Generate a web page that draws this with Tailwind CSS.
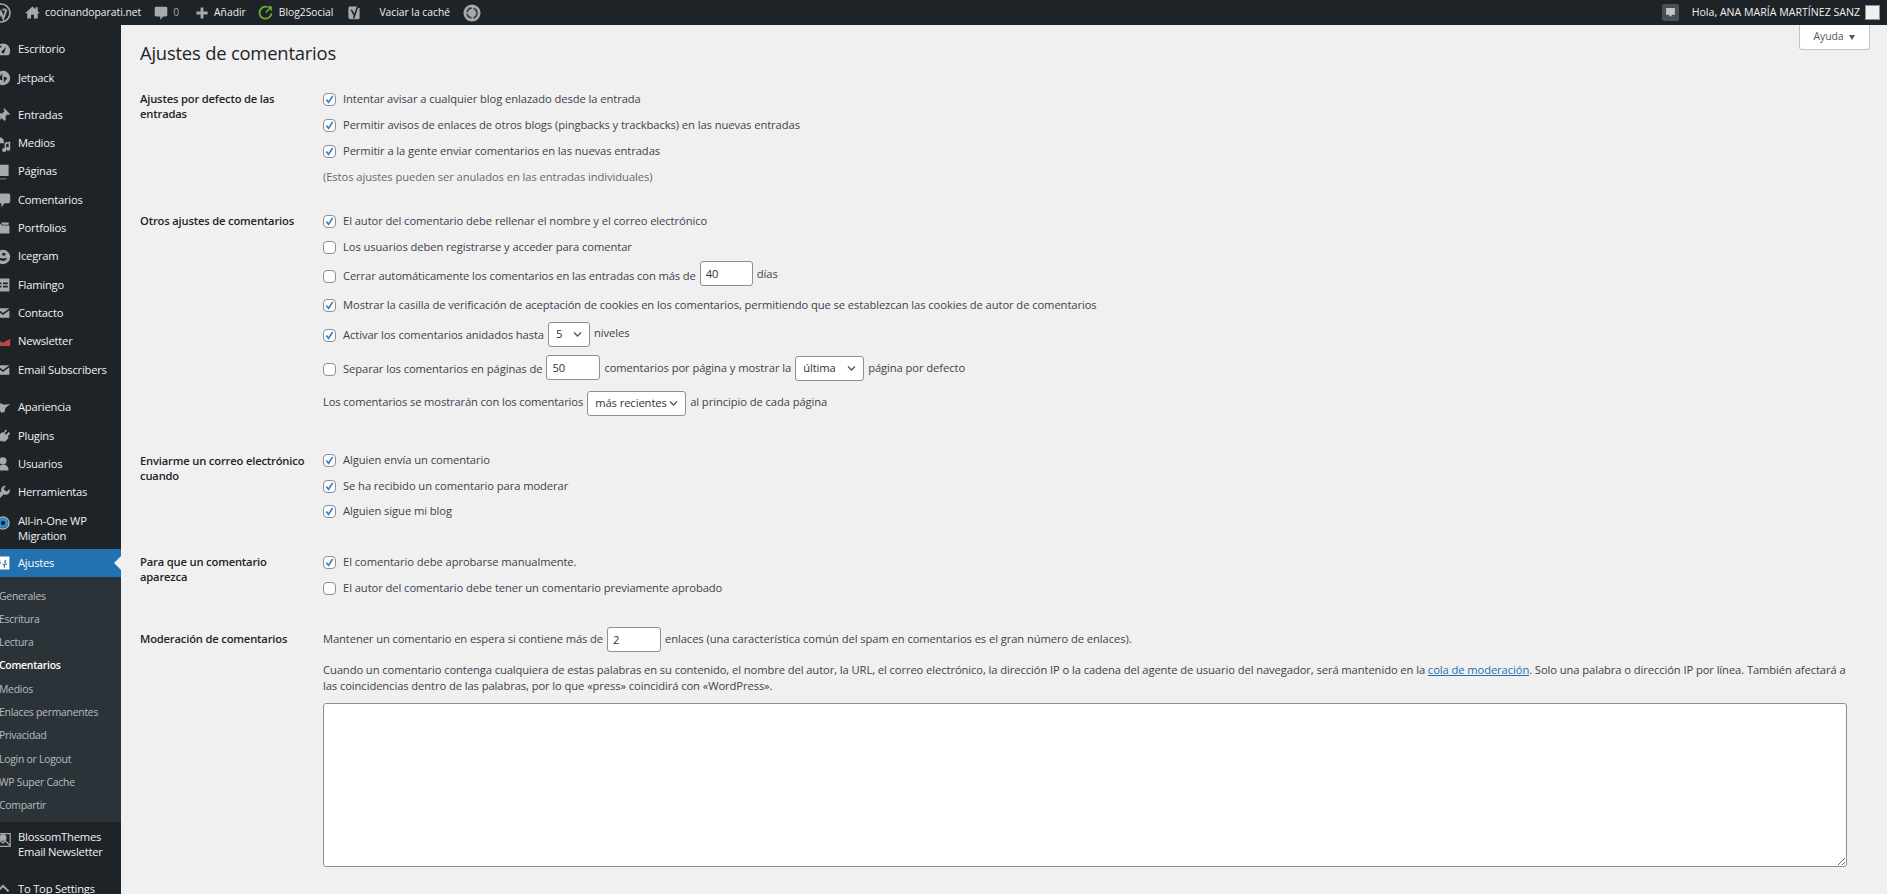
<!DOCTYPE html>
<html lang="es">
<head>
<meta charset="utf-8">
<title>Ajustes de comentarios</title>
<script src="https://cdn.jsdelivr.net/npm/@tailwindcss/browser@4"></script>
</head>
<body class="h-screen overflow-hidden bg-[#f0f0f1] font-['Open_Sans',sans-serif] text-[11.2px] tracking-[-0.075px] text-[#3c434a]">
<header class="h-[25px] bg-[#1d2327] text-[#f0f0f1] text-[10.3px] tracking-normal flex items-center overflow-hidden">
  <svg class="w-[20px] h-[20px] ml-[-9px] text-[#a7aaad]" viewBox="0 0 20 20" fill="none" stroke="currentColor"><circle cx="10" cy="10" r="9" stroke-width="1.6"/><path d="M4.5 6.5l3.2 9 2.3-6.5 2.3 6.5 3.2-9M6 6.5h3M11.5 6.5h3" stroke-width="2"/></svg>
  <svg class="w-[15px] h-[15px] ml-[14px] text-[#a7aaad]" viewBox="0 0 20 20" fill="currentColor"><path d="M10 2L0 11h3v7h5v-5h4v5h5v-7h3l-3-2.7V3h-3v2.6z"/></svg>
  <span class="ml-[5px]">cocinandoparati.net</span>
  <svg class="w-[14px] h-[14px] ml-[13px] text-[#a7aaad]" viewBox="0 0 20 20" fill="currentColor"><path d="M3 1h14a2 2 0 012 2v10a2 2 0 01-2 2h-4l-4 5v-5H3a2 2 0 01-2-2V3a2 2 0 012-2z"/></svg>
  <span class="ml-[5px] text-[#a7aaad]">0</span>
  <svg class="w-[14px] h-[14px] ml-[16px] text-[#a7aaad]" viewBox="0 0 20 20" fill="currentColor"><path d="M8 2h4v6h6v4h-6v6H8v-6H2V8h6z"/></svg>
  <span class="ml-[5px]">Añadir</span>
  <svg class="w-[15px] h-[15px] ml-[12px] text-[#6fae2f]" viewBox="0 0 20 20" fill="none" stroke="currentColor" stroke-width="2.4"><path d="M12 2.5A8 8 0 1018 11"/><path d="M10.5 10L17 3M12.5 2.5H17.5V7.5" stroke-width="2"/></svg>
  <span class="ml-[6px]">Blog2Social</span>
  <svg class="w-[16px] h-[17px] ml-[13px]" viewBox="0 0 20 21"><path fill="#a7aaad" d="M4 3h11l-1 2h3v12a2 2 0 01-2 2H6a3 3 0 01-3-3V5z"/><path fill="none" stroke="#1d2327" stroke-width="2" d="M6.500 7l4 7M14.500 3l-5 15"/></svg>
  <span class="ml-[17px]">Vaciar la caché</span>
  <svg class="w-[18px] h-[18px] ml-[13px]" viewBox="0 0 20 20" fill="none"><circle cx="10" cy="10" r="9.500" fill="#a7aaad"/><circle cx="10" cy="10" r="5.500" stroke="#3c434a" stroke-width="2" stroke-dasharray="7 2"/></svg>
  <span class="ml-auto w-[17px] h-[17px] bg-[#4a4f53] rounded-[2px] flex items-center justify-center">
    <svg class="w-[11px] h-[11px] text-[#c3c4c7]" viewBox="0 0 20 20" fill="currentColor"><path d="M2 2h16v12h-5l-3 4-3-4H2z"/></svg>
  </span>
  <span class="ml-[13px] text-[10.6px]">Hola, ANA MARÍA MARTÍNEZ SANZ</span>
  <span class="ml-[5px] mr-[7px] w-[15px] h-[15px] bg-[#f0f0f1] border border-[#8c8f94]"></span>
</header>

<div class="flex h-[869px] relative">
  <aside class="w-[121px] shrink-0 bg-[#1d2327] text-[#f0f0f1] pt-[10.500px] overflow-hidden tracking-[-0.21px]">
    <nav>
      <a class="flex items-center h-[28.300px]"><svg class="w-[16px] h-[16px] ml-[-5px] mr-[7px] shrink-0 text-[#a7aaad]" viewBox="0 0 20 20" fill="currentColor"><path d="M10 2a9 9 0 00-7 14.500h14A9 9 0 0010 2zm-5 9a1.200 1.200 0 110-2.400A1.200 1.200 0 015 11zm2-4a1.200 1.200 0 110-2.400A1.200 1.200 0 017 7zm4.500 6.500a2 2 0 01-3 0 2 2 0 011-2.800L14 6z"/></svg>Escritorio</a>
      <a class="flex items-center h-[28.300px]"><svg class="w-[16px] h-[16px] ml-[-5px] mr-[7px] shrink-0 text-[#a7aaad]" viewBox="0 0 20 20" fill="currentColor"><path fill-rule="evenodd" d="M10 1a9 9 0 100 18 9 9 0 000-18zM9 4v9L4.500 11zM11 16V8l4.500 2z"/></svg>Jetpack</a>
      <div class="h-[9px]"></div>
      <a class="flex items-center h-[28.300px]"><svg class="w-[16px] h-[16px] ml-[-5px] mr-[7px] shrink-0 text-[#a7aaad]" viewBox="0 0 20 20" fill="currentColor"><path d="M11 1l8 8-2 1-1-1-3 3 .5 4-1.500 1.500-3.500-3.500L3 19l-1-1 5-5.500L3.500 9 5 7.500l4 .5 3-3-1-1z"/></svg>Entradas</a>
      <a class="flex items-center h-[28.300px]"><svg class="w-[16px] h-[16px] ml-[-5px] mr-[7px] shrink-0 text-[#a7aaad]" viewBox="0 0 20 20" fill="currentColor"><path d="M2 2h6l3 3v4H2zM13 8l6-1v9a2.500 2.500 0 11-2-2.400V9.500l-3 .5v7.500a2.500 2.500 0 11-2-2.400V8.500zM3 11a3 3 0 110 6 3 3 0 010-6z"/></svg>Medios</a>
      <a class="flex items-center h-[28.300px]"><svg class="w-[16px] h-[16px] ml-[-5px] mr-[7px] shrink-0 text-[#a7aaad]" viewBox="0 0 20 20" fill="currentColor"><path d="M5 1h12v14H5zM3 4v14h11v1H2V4z"/></svg>Páginas</a>
      <a class="flex items-center h-[28.300px]"><svg class="w-[16px] h-[16px] ml-[-5px] mr-[7px] shrink-0 text-[#a7aaad]" viewBox="0 0 20 20" fill="currentColor"><path d="M3 2h14a2 2 0 012 2v8a2 2 0 01-2 2h-5l-4 5v-5H3a2 2 0 01-2-2V4a2 2 0 012-2z"/></svg>Comentarios</a>
      <a class="flex items-center h-[28.300px]"><svg class="w-[16px] h-[16px] ml-[-5px] mr-[7px] shrink-0 text-[#a7aaad]" viewBox="0 0 20 20" fill="currentColor"><path d="M1 5h6l2 2h9v10H1zM8 3h9v3H9.500L8 4.500z"/></svg>Portfolios</a>
      <a class="flex items-center h-[28.300px]"><svg class="w-[16px] h-[16px] ml-[-5px] mr-[7px] shrink-0 text-[#a7aaad]" viewBox="0 0 20 20" fill="currentColor"><path fill-rule="evenodd" d="M10 1a9 9 0 100 18 9 9 0 000-18zM5 11c3 1 7 1 10 0-.500 3-3 4-5 4s-4.500-1-5-4zM9 5h4v3H9z"/></svg>Icegram</a>
      <a class="flex items-center h-[28.300px]"><svg class="w-[16px] h-[16px] ml-[-5px] mr-[7px] shrink-0 text-[#a7aaad]" viewBox="0 0 20 20" fill="currentColor"><path fill-rule="evenodd" d="M2 2h16v16H2zM4 7h4v2H4zM4 11h4v2H4zM10 7h6v2h-6zM10 11h6v2h-6z"/></svg>Flamingo</a>
      <a class="flex items-center h-[28.300px]"><svg class="w-[16px] h-[16px] ml-[-5px] mr-[7px] shrink-0 text-[#a7aaad]" viewBox="0 0 20 20" fill="currentColor"><path d="M2 4h16l-8 6zM2 6.500l8 6 8-6V16H2z"/></svg>Contacto</a>
      <a class="flex items-center h-[28.300px]"><svg class="w-[16px] h-[16px] ml-[-5px] mr-[7px] shrink-0 text-[#b94a48]" viewBox="0 0 20 20" fill="currentColor"><path d="M1 6l9 5 9-5v9H1z"/></svg>Newsletter</a>
      <a class="flex items-center h-[28.300px]"><svg class="w-[16px] h-[16px] ml-[-5px] mr-[7px] shrink-0 text-[#a7aaad]" viewBox="0 0 20 20" fill="currentColor"><path d="M2 4h16l-8 6zM2 6.500l8 6 8-6V16H2z"/></svg>Email Subscribers</a>
      <div class="h-[9.500px]"></div>
      <a class="flex items-center h-[28.300px]"><svg class="w-[16px] h-[16px] ml-[-5px] mr-[7px] shrink-0 text-[#a7aaad]" viewBox="0 0 20 20" fill="currentColor"><path d="M1 9l6-5 4 2 8-1-6 5-1 5-4 1-3-4z"/></svg>Apariencia</a>
      <a class="flex items-center h-[28.300px]"><svg class="w-[16px] h-[16px] ml-[-5px] mr-[7px] shrink-0 text-[#a7aaad]" viewBox="0 0 20 20" fill="currentColor"><path d="M13 2l2 1-3 4 2 1.500 3-3.500 2 1.500-3 4 1 2-4 4c-2 1-4 .5-5-1l-4 3-2-2 3.500-3.500c-1-1.500-1-3.500 0-5l4-3 1.500 1z"/></svg>Plugins</a>
      <a class="flex items-center h-[28.300px]"><svg class="w-[16px] h-[16px] ml-[-5px] mr-[7px] shrink-0 text-[#a7aaad]" viewBox="0 0 20 20" fill="currentColor"><path d="M10 1.500a4 4 0 110 9 4 4 0 010-9zM3 18c0-5 3-7 7-7s7 2 7 7z"/></svg>Usuarios</a>
      <a class="flex items-center h-[28.300px]"><svg class="w-[16px] h-[16px] ml-[-5px] mr-[7px] shrink-0 text-[#a7aaad]" viewBox="0 0 20 20" fill="currentColor"><path d="M18 5l-3 3-3-1-1-3 3-3a5 5 0 00-6 6.500L1.500 15a2 2 0 003 3l6.500-6.500A5 5 0 0018 5z"/></svg>Herramientas</a>
      <a class="flex h-[42.500px] pt-[6px] leading-[15px]"><svg class="w-[16px] h-[16px] ml-[-5px] mr-[7px] shrink-0 mt-[2px]" viewBox="0 0 20 20" fill="none"><circle cx="10" cy="10" r="7.500" stroke="#a7aaad" stroke-width="2"/><circle cx="10" cy="10" r="4.500" stroke="#2f8fd8" stroke-width="3.500"/></svg><span>All-in-One WP<br>Migration</span></a>
      <a class="flex items-center h-[28px] bg-[#2271b1] text-white relative"><svg class="w-[16px] h-[16px] ml-[-5px] mr-[7px] shrink-0" viewBox="0 0 20 20" fill="currentColor"><path fill-rule="evenodd" d="M2 2h16v16H2zM5 6v3H3.500v1.500h4V9H6.500V6zM12 6v6h1.500V6zM9.500 11v1.500H11V16h1.500v-3.500H15V11z"/></svg>Ajustes<span class="absolute right-0 top-[7px] border-y-[7px] border-y-transparent border-r-[7px] border-r-[#f0f0f1]"></span></a>
      <ul class="bg-[#2c3338] text-[#f0f6fc]/70 text-[10.4px] tracking-[-0.25px] pt-[7.500px] pb-[4.500px]">
        <li class="h-[23.300px] flex items-center -ml-px">Generales</li>
        <li class="h-[23.300px] flex items-center -ml-px">Escritura</li>
        <li class="h-[23.300px] flex items-center -ml-px">Lectura</li>
        <li class="h-[23.300px] flex items-center -ml-px font-semibold text-white">Comentarios</li>
        <li class="h-[23.300px] flex items-center -ml-px">Medios</li>
        <li class="h-[23.300px] flex items-center -ml-px">Enlaces permanentes</li>
        <li class="h-[23.300px] flex items-center -ml-px">Privacidad</li>
        <li class="h-[23.300px] flex items-center -ml-px">Login or Logout</li>
        <li class="h-[23.300px] flex items-center -ml-px">WP Super Cache</li>
        <li class="h-[23.300px] flex items-center -ml-px">Compartir</li>
      </ul>
      <a class="flex h-[45px] pt-[7px] leading-[15px]"><svg class="w-[16px] h-[18px] ml-[-5px] mr-[7px] shrink-0 mt-[2px] text-[#a7aaad]" viewBox="0 0 20 22" fill="none" stroke="currentColor"><path d="M1 3h18v16H1zM1 18l6-6 3 3 3-3 6 6" stroke-width="1.500"/><circle cx="10" cy="8" r="4" fill="currentColor"/></svg><span>BlossomThemes<br>Email Newsletter</span></a>
      <a class="flex items-center h-[28px] mt-[8px]"><svg class="w-[16px] h-[16px] ml-[-5px] mr-[7px] shrink-0 text-[#a7aaad]" viewBox="0 0 20 20" fill="none" stroke="currentColor" stroke-width="2.500"><path d="M3 13l7-7 7 7"/></svg>To Top Settings</a>
    </nav>
  </aside>

  <main class="flex-1 pl-[19px] pr-[40px] min-w-0">
    <h1 class="pt-[18px] h-[61px] text-[18.4px] tracking-[-0.2px] leading-[20px] text-[#1d2327]">Ajustes de comentarios</h1>
    <button class="absolute right-[17px] top-0 w-[71px] h-[25px] bg-white border border-t-0 border-[#c3c4c7] rounded-b-[3px] text-[#50575e] text-[10.4px] flex items-center justify-center gap-[6px]">Ayuda <span class="border-x-[3.500px] border-x-transparent border-t-[5px] border-t-[#50575e]"></span></button>

    <section class="flex">
      <h2 class="w-[183px] shrink-0 font-semibold tracking-[-0.17px] text-[#1d2327] leading-[15px] pt-[5px]">Ajustes por defecto de las<br>entradas</h2>
      <div class="flex-1">
        <div class="h-[26px] flex items-center gap-[7px]"><span class="w-[13px] h-[13px] shrink-0 bg-white border border-[#8c8f94] rounded-[4px] flex items-center justify-center"><svg class="w-[11px] h-[11px] text-[#3582c4]" viewBox="0 0 12 12" fill="none" stroke="currentColor" stroke-width="1.800"><path d="M2.500 6L5 9l4.500-7"/></svg></span>Intentar avisar a cualquier blog enlazado desde la entrada</div>
        <div class="h-[26px] flex items-center gap-[7px]"><span class="w-[13px] h-[13px] shrink-0 bg-white border border-[#8c8f94] rounded-[4px] flex items-center justify-center"><svg class="w-[11px] h-[11px] text-[#3582c4]" viewBox="0 0 12 12" fill="none" stroke="currentColor" stroke-width="1.800"><path d="M2.500 6L5 9l4.500-7"/></svg></span>Permitir avisos de enlaces de otros blogs (pingbacks y trackbacks) en las nuevas entradas</div>
        <div class="h-[26px] flex items-center gap-[7px]"><span class="w-[13px] h-[13px] shrink-0 bg-white border border-[#8c8f94] rounded-[4px] flex items-center justify-center"><svg class="w-[11px] h-[11px] text-[#3582c4]" viewBox="0 0 12 12" fill="none" stroke="currentColor" stroke-width="1.800"><path d="M2.500 6L5 9l4.500-7"/></svg></span>Permitir a la gente enviar comentarios en las nuevas entradas</div>
        <div class="h-[26px] flex items-center text-[#646970]">(Estos ajustes pueden ser anulados en las entradas individuales)</div>
      </div>
    </section>

    <section class="flex mt-[18px]">
      <h2 class="w-[183px] shrink-0 font-semibold tracking-[-0.17px] text-[#1d2327] leading-[15px] pt-[5px]">Otros ajustes de comentarios</h2>
      <div class="flex-1">
        <div class="h-[26px] flex items-center gap-[7px]"><span class="w-[13px] h-[13px] shrink-0 bg-white border border-[#8c8f94] rounded-[4px] flex items-center justify-center"><svg class="w-[11px] h-[11px] text-[#3582c4]" viewBox="0 0 12 12" fill="none" stroke="currentColor" stroke-width="1.800"><path d="M2.500 6L5 9l4.500-7"/></svg></span>El autor del comentario debe rellenar el nombre y el correo electrónico</div>
        <div class="h-[26px] flex items-center gap-[7px]"><span class="w-[13px] h-[13px] shrink-0 bg-white border border-[#8c8f94] rounded-[4px]"></span>Los usuarios deben registrarse y acceder para comentar</div>
        <div class="h-[32px] flex items-center gap-[7px]"><span class="w-[13px] h-[13px] shrink-0 bg-white border border-[#8c8f94] rounded-[4px]"></span><span class="tracking-[-0.11px]">Cerrar automáticamente los comentarios en las entradas con más de</span><input value="40" class="w-[53px] h-[25px] -ml-[3px] mb-[5px] px-[5px] bg-white border border-[#8c8f94] rounded-[3px] text-[#2c3338]"><span class="-ml-[3px] mb-[4px]">días</span></div>
        <div class="h-[26px] flex items-center gap-[7px]"><span class="w-[13px] h-[13px] shrink-0 bg-white border border-[#8c8f94] rounded-[4px] flex items-center justify-center"><svg class="w-[11px] h-[11px] text-[#3582c4]" viewBox="0 0 12 12" fill="none" stroke="currentColor" stroke-width="1.800"><path d="M2.500 6L5 9l4.500-7"/></svg></span>Mostrar la casilla de verificación de aceptación de cookies en los comentarios, permitiendo que se establezcan las cookies de autor de comentarios</div>
        <div class="h-[34px] flex items-center gap-[7px]"><span class="w-[13px] h-[13px] shrink-0 bg-white border border-[#8c8f94] rounded-[4px] flex items-center justify-center"><svg class="w-[11px] h-[11px] text-[#3582c4]" viewBox="0 0 12 12" fill="none" stroke="currentColor" stroke-width="1.800"><path d="M2.500 6L5 9l4.500-7"/></svg></span><span>Activar los comentarios anidados hasta</span><span class="relative -ml-[3px] mb-[1px]"><select class="block appearance-none w-[42px] h-[25px] pl-[7px] bg-white border border-[#8c8f94] rounded-[3px] text-[#2c3338]"><option>5</option></select><svg class="absolute right-[8px] top-[9px] w-[9px] h-[7px] text-[#50575e]" viewBox="0 0 9 7" fill="none" stroke="currentColor" stroke-width="1.300"><path d="M1 1.500l3.500 3.500 3.500-3.500"/></svg></span><span class="-ml-[3px] mb-[4px]">niveles</span></div>
        <div class="h-[34px] flex items-center gap-[7px]"><span class="w-[13px] h-[13px] shrink-0 bg-white border border-[#8c8f94] rounded-[4px]"></span><span>Separar los comentarios en páginas de</span><input value="50" class="w-[54px] h-[25px] -ml-[3px] mb-[3px] px-[5px] bg-white border border-[#8c8f94] rounded-[3px] text-[#2c3338]"><span class="-ml-[3px] mb-[2px]">comentarios por página y mostrar la</span><span class="relative -ml-[3px] mb-[2px]"><select class="block appearance-none w-[69px] h-[25px] pl-[7px] bg-white border border-[#8c8f94] rounded-[3px] text-[#2c3338]"><option>última</option></select><svg class="absolute right-[8px] top-[9px] w-[9px] h-[7px] text-[#50575e]" viewBox="0 0 9 7" fill="none" stroke="currentColor" stroke-width="1.300"><path d="M1 1.500l3.500 3.500 3.500-3.500"/></svg></span><span class="-ml-[3px] mb-[2px]">página por defecto</span></div>
        <div class="h-[34px] flex items-center gap-[4px]"><span class="mb-[2px] tracking-[-0.125px]">Los comentarios se mostrarán con los comentarios</span><span class="relative mt-[1px]"><select class="block appearance-none w-[99px] h-[25px] pl-[7px] bg-white border border-[#8c8f94] rounded-[3px] text-[#2c3338]"><option>más recientes</option></select><svg class="absolute right-[8px] top-[9px] w-[9px] h-[7px] text-[#50575e]" viewBox="0 0 9 7" fill="none" stroke="currentColor" stroke-width="1.300"><path d="M1 1.500l3.500 3.500 3.500-3.500"/></svg></span><span class="mb-[2px]">al principio de cada página</span></div>
      </div>
    </section>

    <section class="flex mt-[27.500px]">
      <h2 class="w-[183px] shrink-0 font-semibold tracking-[-0.17px] text-[#1d2327] leading-[15px] pt-[5px]">Enviarme un correo electrónico<br>cuando</h2>
      <div class="flex-1">
        <div class="h-[25.700px] flex items-center gap-[7px]"><span class="w-[13px] h-[13px] shrink-0 bg-white border border-[#8c8f94] rounded-[4px] flex items-center justify-center"><svg class="w-[11px] h-[11px] text-[#3582c4]" viewBox="0 0 12 12" fill="none" stroke="currentColor" stroke-width="1.800"><path d="M2.500 6L5 9l4.500-7"/></svg></span>Alguien envía un comentario</div>
        <div class="h-[25.700px] flex items-center gap-[7px]"><span class="w-[13px] h-[13px] shrink-0 bg-white border border-[#8c8f94] rounded-[4px] flex items-center justify-center"><svg class="w-[11px] h-[11px] text-[#3582c4]" viewBox="0 0 12 12" fill="none" stroke="currentColor" stroke-width="1.800"><path d="M2.500 6L5 9l4.500-7"/></svg></span>Se ha recibido un comentario para moderar</div>
        <div class="h-[25.700px] flex items-center gap-[7px]"><span class="w-[13px] h-[13px] shrink-0 bg-white border border-[#8c8f94] rounded-[4px] flex items-center justify-center"><svg class="w-[11px] h-[11px] text-[#3582c4]" viewBox="0 0 12 12" fill="none" stroke="currentColor" stroke-width="1.800"><path d="M2.500 6L5 9l4.500-7"/></svg></span>Alguien sigue mi blog</div>
      </div>
    </section>

    <section class="flex mt-[24.500px]">
      <h2 class="w-[183px] shrink-0 font-semibold tracking-[-0.17px] text-[#1d2327] leading-[15px] pt-[5px]">Para que un comentario<br>aparezca</h2>
      <div class="flex-1">
        <div class="h-[26px] flex items-center gap-[7px]"><span class="w-[13px] h-[13px] shrink-0 bg-white border border-[#8c8f94] rounded-[4px] flex items-center justify-center"><svg class="w-[11px] h-[11px] text-[#3582c4]" viewBox="0 0 12 12" fill="none" stroke="currentColor" stroke-width="1.800"><path d="M2.500 6L5 9l4.500-7"/></svg></span>El comentario debe aprobarse manualmente.</div>
        <div class="h-[26px] flex items-center gap-[7px]"><span class="w-[13px] h-[13px] shrink-0 bg-white border border-[#8c8f94] rounded-[4px]"></span>El autor del comentario debe tener un comentario previamente aprobado</div>
      </div>
    </section>

    <section class="flex mt-[25px]">
      <h2 class="w-[183px] shrink-0 font-semibold tracking-[-0.17px] text-[#1d2327] leading-[15px] pt-[5px]">Moderación de comentarios</h2>
      <div class="flex-1 min-w-0">
        <div class="h-[26px] flex items-center gap-[4px]"><span class="tracking-[-0.1px]">Mantener un comentario en espera si contiene más de</span><input value="2" class="w-[54px] h-[25px] px-[5px] bg-white border border-[#8c8f94] rounded-[3px] text-[#2c3338]"><span>enlaces (una característica común del spam en comentarios es el gran número de enlaces).</span></div>
        <p class="mt-[10px] leading-[16px] tracking-[-0.085px]">Cuando un comentario contenga cualquiera de estas palabras en su contenido, el nombre del autor, la URL, el correo electrónico, la dirección IP o la cadena del agente de usuario del navegador, será mantenido en la <a class="text-[#2271b1] underline">cola de moderación</a>. Solo una palabra o dirección IP por línea. También afectará a<br>las coincidencias dentro de las palabras, por lo que «press» coincidirá con «WordPress».</p>
        <textarea class="block mt-[9px] w-[1524px] h-[164px] bg-white border border-[#8c8f94] rounded-[3px]"></textarea>
      </div>
    </section>
  </main>
</div>
</body>
</html>
